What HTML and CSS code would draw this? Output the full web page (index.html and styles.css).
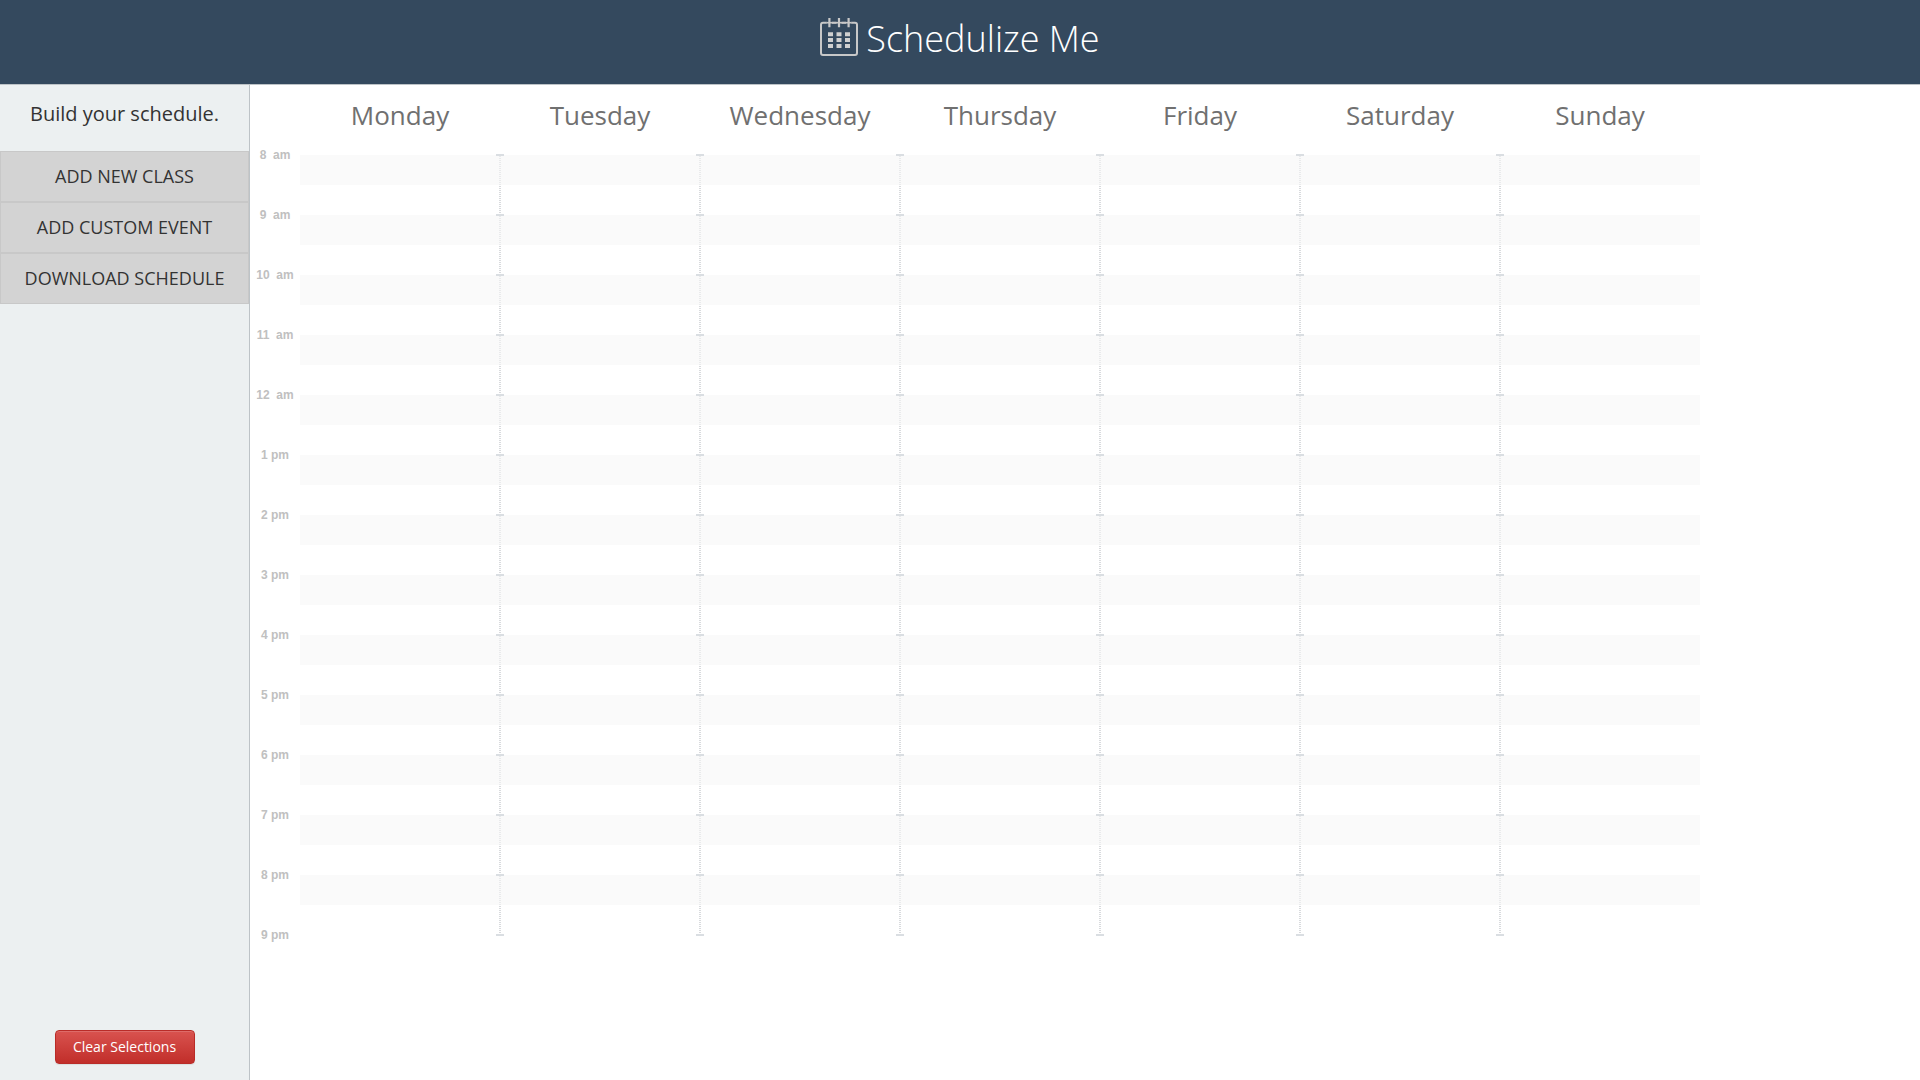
FILE: index.html
```html
<!DOCTYPE html>
<html lang="en">
<head>
  <meta charset="utf-8">
  <title>Schedulize Me</title>
  <meta name="viewport" content="width=device-width, initial-scale=1">
  <link rel="stylesheet" href="styles.css">
</head>
<body>
  <header class="topbar">
    <svg class="logo" viewBox="0 0 38 38" width="38" height="38" aria-hidden="true">
      <rect x="1" y="4.7" width="36" height="32.3" rx="2" fill="none" stroke="#c8c8c8" stroke-width="2"/>
      <g stroke="#34495e" stroke-width="5">
        <path d="M9.4 3v4M19 3v4M28.6 3v4"/>
      </g>
      <g stroke="#c8c8c8" stroke-width="2.2">
        <path d="M9.4 0v9.3M19 0v9.3M28.6 0v9.3"/>
        <path stroke-width="1.6" d="M7 4.7h24"/>
      </g>
      <path fill="#d0d0d0" d="M8 14.2h5v4H8zM16.5 14.2h5v4h-5zM25 14.2h5v4h-5zM8 20.1h5v4H8zM16.5 20.1h5v4h-5zM25 20.1h5v4h-5zM8 26h5v4H8zM16.5 26h5v4h-5zM25 26h5v4h-5z"/>
    </svg>
    <h1 class="title">Schedulize Me</h1>
  </header>
  <div class="layout">
    <aside class="sidebar">
      <p class="tagline">Build your schedule.</p>
      <nav class="actions">
        <button type="button" class="action">ADD NEW CLASS</button>
        <button type="button" class="action">ADD CUSTOM EVENT</button>
        <button type="button" class="action">DOWNLOAD SCHEDULE</button>
      </nav>
      <button type="button" class="clear">Clear Selections</button>
    </aside>
    <main class="schedule">
      <div class="days">
        <h2 class="day-name">Monday</h2>
        <h2 class="day-name">Tuesday</h2>
        <h2 class="day-name">Wednesday</h2>
        <h2 class="day-name">Thursday</h2>
        <h2 class="day-name">Friday</h2>
        <h2 class="day-name">Saturday</h2>
        <h2 class="day-name">Sunday</h2>
      </div>
      <div class="board">
        <ol class="hours">
          <li class="hour">8  am</li>
          <li class="hour">9  am</li>
          <li class="hour">10  am</li>
          <li class="hour">11  am</li>
          <li class="hour">12  am</li>
          <li class="hour">1 pm</li>
          <li class="hour">2 pm</li>
          <li class="hour">3 pm</li>
          <li class="hour">4 pm</li>
          <li class="hour">5 pm</li>
          <li class="hour">6 pm</li>
          <li class="hour">7 pm</li>
          <li class="hour">8 pm</li>
          <li class="hour">9 pm</li>
        </ol>
        <div class="day"></div>
        <div class="day"></div>
        <div class="day"></div>
        <div class="day"></div>
        <div class="day"></div>
        <div class="day"></div>
        <div class="day"></div>
      </div>
    </main>
  </div>
</body>
</html>
```
FILE: styles.css
```css
* {
  box-sizing: border-box;
}

body {
  display: flex;
  flex-direction: column;
  min-height: 100vh;
  margin: 0;
  background: #fff;
  color: #333;
  font-family: "Open Sans", sans-serif;
}

.topbar {
  display: flex;
  justify-content: center;
  gap: 8px;
  height: 85px;
  padding-top: 18px;
  background: #34495e;
  border-bottom: 1px solid #bdc3c7;
}

.logo {
  flex: none;
}

.title {
  margin: 0;
  color: #fff;
  font-size: 36px;
  font-weight: 300;
  line-height: 42px;
}

.layout {
  display: flex;
  flex: 1;
}

.sidebar {
  display: flex;
  flex: none;
  flex-direction: column;
  width: 250px;
  padding-bottom: 16px;
  background: #ecf0f1;
  border-right: 1px solid #bdc3c7;
}

.tagline {
  margin: 0;
  padding: 14px 0 22px;
  font-size: 20px;
  line-height: 30px;
  text-align: center;
}

.actions {
  display: flex;
  flex-direction: column;
}

.action {
  height: 51px;
  padding: 0 0 2px;
  background: #d3d3d3;
  border: 1px solid #c8c8c8;
  color: #333;
  font: 18px "Open Sans", sans-serif;
}

.clear {
  align-self: center;
  height: 34px;
  margin-top: auto;
  width: 140px;
  padding: 0 0 2px;
  background: linear-gradient(#d9534f, #c12e2a);
  border: 1px solid #b92c28;
  border-radius: 4px;
  box-shadow: inset 0 1px 0 rgba(255, 255, 255, 0.15), 0 1px 1px rgba(0, 0, 0, 0.075);
  color: #fff;
  font: 14px "Open Sans", sans-serif;
}

.schedule {
  flex: 1;
  min-width: 0;
}

.days,
.board {
  display: grid;
  grid-template-columns: 50px repeat(7, minmax(0, 200px));
}

.day-name {
  margin: 0;
  padding: 10px 0;
  color: #707070;
  font-size: 26px;
  font-weight: 400;
  line-height: 40px;
  text-align: center;
}

.day-name:first-child {
  grid-column-start: 2;
}

.hours {
  margin: 0;
  padding: 0;
  list-style: none;
}

.hour {
  height: 60px;
  color: #c0c0c0;
  font: bold 12px/20px "Liberation Sans", Arial, sans-serif;
  text-align: center;
  white-space: pre;
}

.day {
  position: relative;
  height: 780px;
  margin-top: 10px;
  background: repeating-linear-gradient(#fafafa 0 30px, #fff 30px 60px);
}

/* dotted divider between two days */
.day + .day::before {
  position: absolute;
  top: 0;
  bottom: 0;
  left: -1px;
  width: 2px;
  background:
    repeating-linear-gradient(rgba(250, 250, 250, 0.5) 0 30px, transparent 30px 60px),
    repeating-linear-gradient(transparent 0 1px, #d8dadd 1px 2px);
  content: "";
}

/* hour ticks on the divider */
.day + .day::after {
  position: absolute;
  top: -1px;
  bottom: -1px;
  left: -4px;
  width: 8px;
  background: repeating-linear-gradient(#dadee2 0 2px, transparent 2px 60px);
  content: "";
}
```
